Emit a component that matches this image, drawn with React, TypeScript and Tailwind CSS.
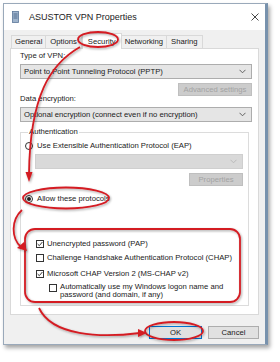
import React from 'react';

function Chevron({ color = '#555' }: { color?: string }) {
  return (
    <svg width="7" height="5" viewBox="0 0 7 5" className="shrink-0">
      <path d="M0.5 0.8 L3.5 3.8 L6.5 0.8" fill="none" stroke={color} strokeWidth="0.9" />
    </svg>
  );
}

function Dropdown({ label, disabled }: { label?: string; disabled?: boolean }) {
  return (
    <div
      className={
        'h-[15px] flex items-center justify-between pl-[3px] pr-[5px] border ' +
        (disabled ? 'bg-[#d9d9d9] border-[#cfcfcf]' : 'bg-[#e5e5e5] border-[#adadad]')
      }
    >
      <span className="whitespace-nowrap">{label}</span>
      <Chevron color={disabled ? '#b5b5b5' : '#555'} />
    </div>
  );
}

function Radio({ checked }: { checked?: boolean }) {
  return (
    <span className="w-[8px] h-[8px] rounded-full border border-[#333] bg-white flex items-center justify-center shrink-0">
      {checked && <span className="w-[4px] h-[4px] rounded-full bg-[#222]" />}
    </span>
  );
}

function Check({ checked }: { checked?: boolean }) {
  return (
    <span className="w-[8px] h-[8px] border border-[#333] bg-white flex items-center justify-center shrink-0">
      {checked && (
        <svg width="6" height="6" viewBox="0 0 6 6">
          <path d="M0.6 3 L2.3 4.7 L5.4 1" fill="none" stroke="#222" strokeWidth="0.9" />
        </svg>
      )}
    </span>
  );
}

function Annotations() {
  const red = '#d41c24';
  return (
    <svg className="absolute inset-0 pointer-events-none" width="280" height="362" viewBox="0 0 280 362">
      <defs>
        <filter id="sh" x="-20%" y="-20%" width="140%" height="140%">
          <feDropShadow dx="1" dy="1.2" stdDeviation="0.8" floodColor="#000" floodOpacity="0.35" />
        </filter>
      </defs>
      <g filter="url(#sh)" fill="none" stroke={red} strokeWidth="1.8">
        {/* security tab */}
        <ellipse cx="98" cy="39.5" rx="20" ry="7.5" />
        <path d="M80 47 C 50 64, 30 96, 29 174" />
        {/* allow these protocols */}
        <ellipse cx="66" cy="198" rx="43" ry="10.5" />
        <path d="M22 210 C 11 220, 11 238, 21 247" />
        {/* protocol list */}
        <rect x="25" y="229" width="215" height="73" rx="10" />
        <path d="M39 308 C 52 336, 100 338, 140 333" />
        {/* ok */}
        <ellipse cx="174" cy="331" rx="29" ry="9" />
      </g>
      <g filter="url(#sh)" fill={red}>
        <path d="M25.5 172 L32.5 172 L29 182 Z" />
        <path d="M17 248 L24 242 L27 251 Z" />
        <path d="M138 329 L147 333 L138 337 Z" />
      </g>
    </svg>
  );
}

export default function App() {
  return (
    <div className="relative w-[280px] h-[362px] bg-white overflow-hidden font-['Liberation_Sans',Arial,sans-serif] text-[7.7px] leading-[10px] text-[#1a1a1a]">
      <div className="ml-[3px] mt-[3px] w-[265px] h-[342px] border border-[#9aa9ba] border-r-[3px] border-r-[#7892ad] bg-[#f0f0f0] shadow-[2px_3px_4px_rgba(0,0,0,0.35)] flex flex-col">
        {/* title bar */}
        <div className="h-[26px] bg-white flex items-center pl-[8px] pr-[6px] shrink-0">
          <svg width="7" height="12" viewBox="0 0 7 12" className="shrink-0">
            <rect x="0.5" y="0.5" width="6" height="11" fill="#9fb4cc" stroke="#5b7799" strokeWidth="0.8" />
            <path d="M1.5 3 H5.5 M1.5 5 H5.5 M1.5 7 H5.5" stroke="#3d5a80" strokeWidth="0.8" />
          </svg>
          <span className="ml-[10px] text-[9px] text-[#222]">ASUSTOR VPN Properties</span>
          <svg width="8" height="8" viewBox="0 0 8 8" className="ml-auto">
            <path d="M0.5 0.5 L7.5 7.5 M7.5 0.5 L0.5 7.5" stroke="#333" strokeWidth="0.9" />
          </svg>
        </div>

        <div className="flex-1 flex flex-col pl-[6px] pr-[6px]">
          {/* tabs */}
          <div className="h-[18px] flex items-end pl-[1px] shrink-0">
            <div className="h-[13px] px-[3px] border border-b-0 border-[#d9d9d9] bg-[#f0f0f0] flex items-center">General</div>
            <div className="h-[13px] px-[4px] border border-b-0 border-l-0 border-[#d9d9d9] bg-[#f0f0f0] flex items-center">Options</div>
            <div className="h-[16px] px-[5px] border border-b-0 border-[#d9d9d9] bg-white flex items-center -mb-[1px] relative">Security</div>
            <div className="h-[13px] px-[3px] border border-b-0 border-l-0 border-[#d9d9d9] bg-[#f0f0f0] flex items-center">Networking</div>
            <div className="h-[13px] px-[4px] border border-b-0 border-l-0 border-[#d9d9d9] bg-[#f0f0f0] flex items-center">Sharing</div>
          </div>

          {/* panel */}
          <div className="h-[267px] bg-white border border-[#d9d9d9] pl-[9px] pr-[6px] pt-[2px] flex flex-col shrink-0">
            <div>Type of VPN:</div>
            <div className="mt-[3px]">
              <Dropdown label="Point to Point Tunneling Protocol (PPTP)" />
            </div>
            <div className="mt-[4px] flex justify-end">
              <div className="w-[74px] h-[13px] bg-[#cccccc] border border-[#bfbfbf] text-[#a3a3a3] flex items-center justify-center">
                Advanced settings
              </div>
            </div>
            <div className="-mt-[2px]">Data encryption:</div>
            <div className="mt-[3px]">
              <Dropdown label="Optional encryption (connect even if no encryption)" />
            </div>

            <fieldset className="mt-[5px] mr-[3px] border border-[#dcdcdc] h-[179px] pl-[4px] pr-[5px]">
              <legend className="ml-[3px] px-[1px] leading-[10px]">Authentication</legend>
              <div className="flex items-center gap-[4px] mt-[4px]">
                <Radio />
                <span>Use Extensible Authentication Protocol (EAP)</span>
              </div>
              <div className="ml-[10px] mt-[3px]">
                <Dropdown disabled />
              </div>
              <div className="mt-[4px] flex justify-end">
                <div className="w-[54px] h-[13px] bg-[#cccccc] border border-[#bfbfbf] text-[#a3a3a3] flex items-center justify-center">
                  Properties
                </div>
              </div>
              <div className="flex items-center gap-[4px] mt-[8px]">
                <Radio checked />
                <span>Allow these protocols</span>
              </div>
              <div className="pl-[11px] mt-[35px] flex flex-col">
                <div className="flex items-center gap-[3px]">
                  <Check checked />
                  <span>Unencrypted password (PAP)</span>
                </div>
                <div className="flex items-center gap-[3px] mt-[4px]">
                  <Check />
                  <span>Challenge Handshake Authentication Protocol (CHAP)</span>
                </div>
                <div className="flex items-center gap-[3px] mt-[6px]">
                  <Check checked />
                  <span>Microsoft CHAP Version 2 (MS-CHAP v2)</span>
                </div>
                <div className="flex items-start gap-[3px] mt-[4px] pl-[13px]">
                  <span className="mt-[1px]">
                    <Check />
                  </span>
                  <span className="leading-[8px]">
                    Automatically use my Windows logon name and
                    <br />
                    password (and domain, if any)
                  </span>
                </div>
              </div>
            </fieldset>
          </div>

          {/* buttons */}
          <div className="mt-[11px] flex justify-end gap-[6px]">
            <div className="w-[53px] h-[13px] bg-[#e1e1e1] border border-[#0078d7] flex items-center justify-center">OK</div>
            <div className="w-[51px] h-[13px] bg-[#e1e1e1] border border-[#adadad] flex items-center justify-center">Cancel</div>
          </div>
        </div>
      </div>
      <Annotations />
    </div>
  );
}
